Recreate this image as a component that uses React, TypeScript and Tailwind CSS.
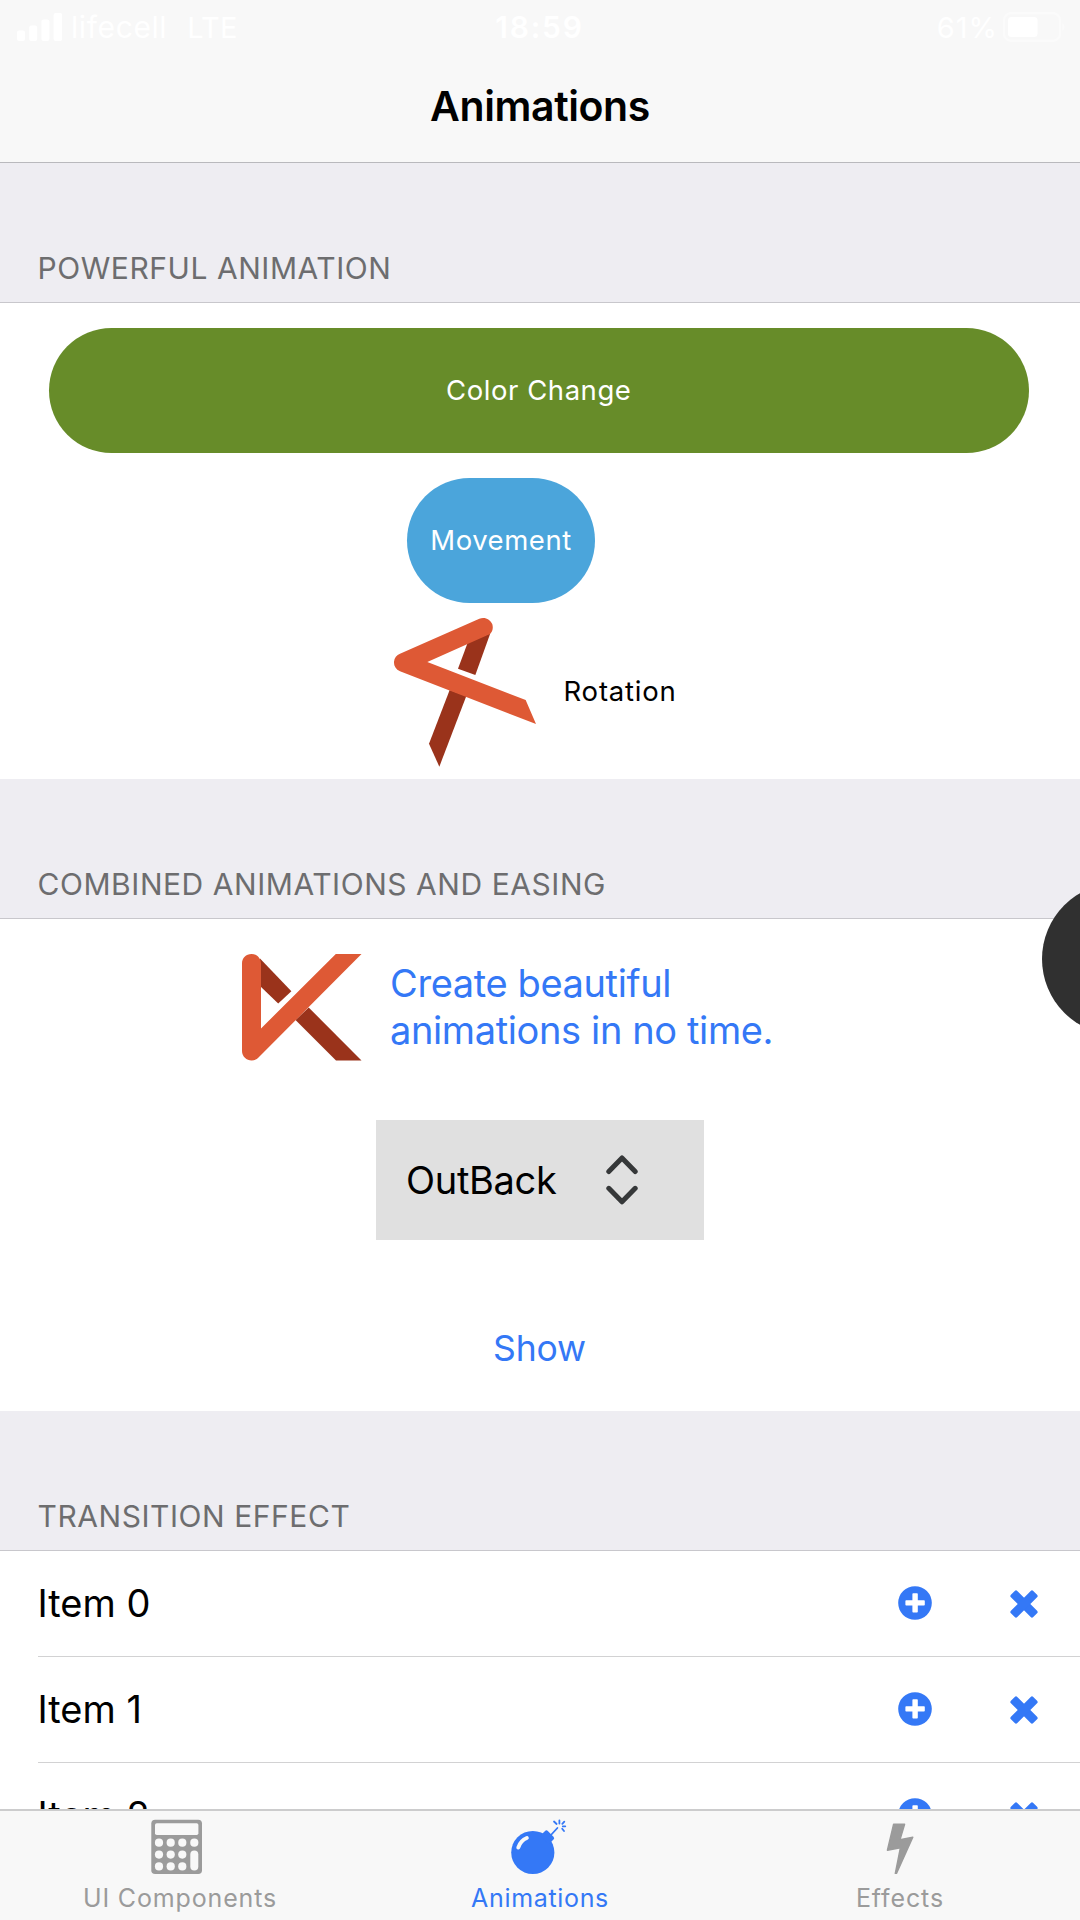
import React from "react";

function StatusBar() {
  return (
    <div className="flex h-[54px] items-center pl-[17px] pr-[14px] text-[30px] leading-none text-white">
      <svg className="h-[28px] w-[46px] -mt-[1px]" viewBox="0 0 46 28" fill="currentColor">
        <rect x="0" y="17.5" width="8" height="10.5" rx="2" />
        <rect x="12.2" y="12.5" width="8" height="15.5" rx="2" />
        <rect x="24.4" y="6.5" width="8" height="21.5" rx="2" />
        <rect x="36.6" y="0" width="8.5" height="28" rx="2" />
      </svg>
      <span className="ml-[8px] tracking-[0.6px]">lifecell</span>
      <span className="ml-[20px] w-[308px] text-[29px] tracking-[0.2px]">LTE</span>
      <span className="font-semibold tracking-[1.8px]">18:59</span>
      <span className="ml-auto text-[29px] tracking-[1px]">61%</span>
      <svg className="ml-[4px] h-[30px] w-[64px] -mt-[1px]" viewBox="0 0 64 30">
        <rect x="2" y="1.2" width="56" height="27.6" rx="7" fill="none" stroke="#fbfbfb" strokeWidth="2.2" />
        <rect x="6" y="5" width="29.5" height="20" rx="3.5" fill="#fff" />
        <path d="M60.5 10.5q3.5 4.5 0 9z" fill="#fbfbfb" />
      </svg>
    </div>
  );
}

function SectionHeader({ title }: { title: string }) {
  return (
    <div className="flex h-[140px] shrink-0 items-end border-b border-[#c8c7cc] bg-[#eeedf2] pb-[18px] pl-[37.5px]">
      <span className="text-[30px] leading-[32px] tracking-[0.55px] text-[#6d6d6f]">{title}</span>
    </div>
  );
}

function RotatedLogo() {
  return (
    <svg className="h-[155px] w-[150px]" viewBox="60 465 450 465">
      <g fill="#9a331b">
        <path d="M293 548L361 520L316 645L264 626Z" />
        <path d="M239 690L289 708L208 920L177 851Z" />
      </g>
      <path
        fill="#de5935"
        d="M328 476C345 470 361 478 367 493C370 505 368 514 360 522L172 606L467 720L498 792L90 634C77 628 71 617 72 605C73 593 80 585 90 581Z"
      />
    </svg>
  );
}

function Logo() {
  return (
    <svg className="h-[107px] w-[120px]" viewBox="0 0 120 107">
      <g fill="#9a331b">
        <path d="M18 4.5L49.4 37.2L36.2 49.4L18 32Z" />
        <path d="M53.5 66L66.7 53.5L119.5 106.5H94Z" />
      </g>
      <path fill="#de5935" d="M0 9.5C0 4 4 0 9.5 0C15 0 19 4.5 19 9.5V74.5L93.8 0H119.5L16.5 103.5C10 110 0 105 0 97Z" />
    </svg>
  );
}

function PlusIcon() {
  return (
    <svg className="mb-[2px] h-[34px] w-[34px]" viewBox="0 0 34 34">
      <circle cx="17" cy="17" r="16.8" fill="#3478f6" />
      <path
        d="M15.2 7.2h3.8q.8 0 .8.8v6.2h6.2q.8 0 .8.8v3.8q0 .8-.8.8h-6.2v6.2q0 .8-.8.8h-3.8q-.8 0-.8-.8v-6.2H8.200q-.8 0-.8-.8V15q0-.8.8-.8h6.200V8q0-.8.8-.8z"
        fill="#fff"
      />
    </svg>
  );
}

function CrossIcon() {
  return (
    <svg className="mt-[1px] ml-[78px] h-[28px] w-[28px]" viewBox="0 0 28 28">
      <g fill="#3478f6" transform="rotate(45 14 14)">
        <rect x="-1.800" y="9.500" width="31.600" height="9" rx="1.800" />
        <rect x="9.500" y="-1.800" width="9" height="31.600" rx="1.800" />
      </g>
    </svg>
  );
}

function Row({ label }: { label: string }) {
  return (
    <div className="flex h-[106px] shrink-0 pl-[38px]">
      <div className="flex flex-1 items-center border-b border-[#d2d2d3] pr-[42.5px]">
        <span className="-ml-[0.5px] flex-1 text-[38px] tracking-[0px] text-black">{label}</span>
        <PlusIcon />
        <CrossIcon />
      </div>
    </div>
  );
}

function CalculatorIcon() {
  const cells = [
    [159, 1842.7], [170.7, 1842.7], [182.3, 1842.7], [194.3, 1842.7],
    [159, 1854.6], [170.7, 1854.6], [182.3, 1854.6],
    [159, 1866.4], [170.7, 1866.4], [182.3, 1866.4],
  ];
  return (
    <svg className="h-[60px] w-[60px]" viewBox="150 1817 60 60">
      <rect x="151.300" y="1819.700" width="50.700" height="54.300" rx="3.800" fill="#9b9b9b" />
      <g fill="#f8f8f8">
        <rect x="155" y="1823.200" width="43.400" height="11.800" rx="1.800" />
        {cells.map(([x, y]) => (
          <circle key={`${x}-${y}`} cx={x} cy={y} r="4.100" />
        ))}
        <rect x="190.300" y="1850.600" width="8" height="20" rx="4" />
      </g>
    </svg>
  );
}

function BombIcon() {
  return (
    <svg className="h-[60px] w-[60px]" viewBox="510 1817 60 60">
      <circle cx="532.800" cy="1852.500" r="21.600" fill="#3478f6" />
      <rect x="541.500" y="1832.500" width="12" height="9" rx="2" fill="#3478f6" transform="rotate(45 547.500 1837)" />
      <path d="M518.300 1847.500Q520.500 1840.500 526.800 1838" fill="none" stroke="#f8f8f8" strokeWidth="4" strokeLinecap="round" />
      <g fill="none" stroke="#3478f6" strokeWidth="1.800" strokeLinecap="round">
        <path d="M550.500 1835.500L557.400 1828" />
        <path d="M559.400 1820.400V1823.600M564.300 1821.600L562.300 1823.800M565.300 1826.300H562.800M564 1831L562.200 1828.700M554 1821.500L556.600 1824" />
      </g>
    </svg>
  );
}

function BoltIcon() {
  return (
    <svg className="h-[60px] w-[60px]" viewBox="870 1817 60 60">
      <path
        d="M893.600 1824.200H904.600L900 1839.700L912.800 1837.200L896.500 1873.400H895.300L900.400 1847.700L887.400 1850.200Z"
        fill="#9b9b9b"
        stroke="#9b9b9b"
        strokeWidth="1.400"
        strokeLinejoin="round"
      />
    </svg>
  );
}

export default function App() {
  return (
    <div className="relative flex h-[1920px] w-[1080px] flex-col overflow-hidden bg-white font-['Inter',sans-serif] text-black">
      <header className="flex h-[163px] shrink-0 flex-col border-b border-[#b9b9bd] bg-[#f8f8f8]">
        <StatusBar />
        <h1 className="mt-[27px] text-center text-[41px] leading-[50px] font-semibold tracking-[-0.4px]">Animations</h1>
      </header>

      <main className="flex h-[1646px] shrink-0 flex-col overflow-hidden">
        <SectionHeader title="POWERFUL ANIMATION" />
        <section className="flex h-[476px] shrink-0 flex-col pt-[25px] text-[27.5px] tracking-[0.55px]">
          <div className="ml-[49px] flex h-[125px] w-[979.5px] items-center justify-center rounded-[62.5px] bg-[#678c29] text-white">
            Color Change
          </div>
          <div className="mt-[25px] ml-[407px] flex h-[125px] w-[188px] items-center justify-center rounded-[62.5px] bg-[#4ba5db] text-white">
            Movement
          </div>
          <div className="mt-[12px] ml-[390px] flex h-[155px] items-start">
            <RotatedLogo />
            <span className="mt-[59px] ml-[23.5px] leading-[34px] tracking-[0.8px]">Rotation</span>
          </div>
        </section>

        <SectionHeader title="COMBINED ANIMATIONS AND EASING" />
        <section className="flex h-[492px] shrink-0 flex-col items-center">
          <div className="mt-[35px] mr-[36px] flex h-[107px] w-[560px]">
            <Logo />
            <p className="mt-[6px] ml-[28px] text-[38px] leading-[47px] tracking-[-0.38px] whitespace-nowrap text-[#3478f6]">
              Create beautiful
              <br />
              animations in no time.
            </p>
          </div>
          <button className="mt-[59px] flex h-[120px] w-[328px] items-center bg-[#e0e0e0] pl-[30px] text-[38px] tracking-[-0.31px]">
            OutBack
            <svg className="ml-auto mr-[66px] h-[50px] w-[32px]" viewBox="0 0 32 50" fill="none" stroke="#363839" strokeWidth="5" strokeLinecap="round" strokeLinejoin="round">
              <path d="M2.800 16.500L16 3L29.200 16.500M2.800 33.300L16 46.800L29.200 33.300" />
            </svg>
          </button>
          <button className="mt-[86px] mr-[1px] text-[35.5px] leading-[46px] tracking-[-0.1px] text-[#3478f6]">Show</button>
        </section>

        <SectionHeader title="TRANSITION EFFECT" />
        <section className="flex flex-col">
          <Row label="Item 0" />
          <Row label="Item 1" />
          <Row label="Item 2" />
        </section>
      </main>

      <nav className="grid h-[111px] shrink-0 grid-cols-3 border-t-2 border-[#cccccd] bg-[#f8f8f8] text-[25px] text-[#9b9b9b]">
        <div className="flex flex-col items-center pt-[6px]">
          <CalculatorIcon />
          <span className="mt-[6px] leading-[30px] tracking-[0.85px]">UI Components</span>
        </div>
        <div className="flex flex-col items-center pt-[6px] text-[#3478f6]">
          <BombIcon />
          <span className="mt-[6px] leading-[30px] tracking-[0.67px]">Animations</span>
        </div>
        <div className="flex flex-col items-center pt-[6px]">
          <BoltIcon />
          <span className="mt-[6px] leading-[30px] tracking-[0.9px]">Effects</span>
        </div>
      </nav>

      <div className="absolute top-[883px] left-[1042px] h-[152px] w-[152px] rounded-full bg-[#303030]" />
    </div>
  );
}
